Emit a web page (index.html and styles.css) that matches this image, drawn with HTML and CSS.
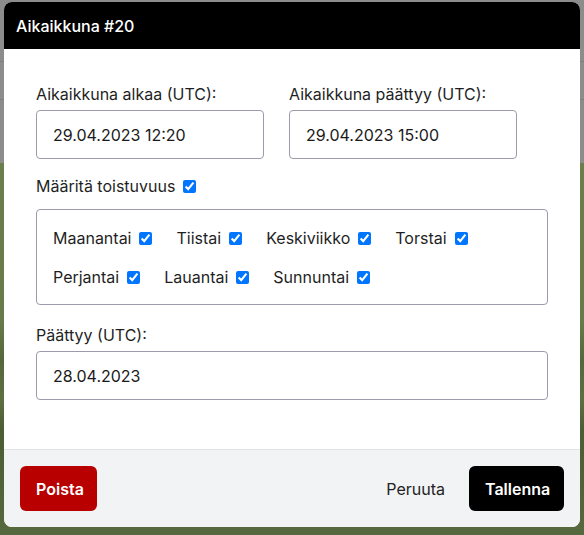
FILE: index.html
```html
<!DOCTYPE html>
<html lang="fi">
<head>
<meta charset="utf-8">
<title>Aikaikkuna #20</title>
<link rel="stylesheet" href="styles.css">
</head>
<body>
<div class="modal">
  <div class="modal-header">Aikaikkuna #20</div>
  <div class="modal-body">
    <div class="row">
      <div class="field">
        <label class="label">Aikaikkuna alkaa (UTC):</label>
        <div class="input input-half">29.04.2023 12:20</div>
      </div>
      <div class="field">
        <label class="label">Aikaikkuna päättyy (UTC):</label>
        <div class="input input-half">29.04.2023 15:00</div>
      </div>
    </div>
    <label class="check-line">Määritä toistuvuus <input type="checkbox" checked></label>
    <div class="days">
      <label class="day">Maanantai <input type="checkbox" checked></label>
      <label class="day">Tiistai <input type="checkbox" checked></label>
      <label class="day">Keskiviikko <input type="checkbox" checked></label>
      <label class="day">Torstai <input type="checkbox" checked></label>
      <label class="day">Perjantai <input type="checkbox" checked></label>
      <label class="day">Lauantai <input type="checkbox" checked></label>
      <label class="day">Sunnuntai <input type="checkbox" checked></label>
    </div>
    <label class="label">Päättyy (UTC):</label>
    <div class="input">28.04.2023</div>
  </div>
  <div class="modal-footer">
    <button class="btn btn-danger">Poista</button>
    <div class="spacer"></div>
    <button class="btn btn-link">Peruuta</button>
    <button class="btn btn-primary">Tallenna</button>
  </div>
</div>
</body>
</html>
```
FILE: styles.css
```css
* { box-sizing: border-box; }
html, body { margin: 0; height: 100%; }
body {
  font-family: Inter, "Noto Sans", sans-serif;
  color: #1f1f1f;
  padding: 2px 4px 0 4px;
  background:
    linear-gradient(to bottom,
      #8c8c8c 0, #8c8c8c 61px, #7f7f7f 61px, #7f7f7f 62px,
      #8c8c8c 62px, #8c8c8c 99px, #7f7f7f 99px, #7f7f7f 100px,
      #8c8c8c 100px, #8c8c8c 163px,
      #6b7f4c 163px, #677a49 320px, #55683b 360px, #5d7042 400px,
      #4b5d33 430px, #4f6137 470px, #56683d 535px);
}
.modal {
  width: 576px;
  height: 525px;
  background: #fff;
  border-radius: 8px;
  overflow: hidden;
  display: flex;
  flex-direction: column;
}
.modal-header {
  background: #000;
  color: #fff;
  height: 47px;
  padding: 0 12px;
  display: flex;
  align-items: center;
  font-size: 16px;
  font-weight: 500;
}
.modal-body {
  flex: 1;
  padding: 35px 32px 0 32px;
  display: flex;
  flex-direction: column;
}
.row { display: flex; gap: 25px; }
.field { display: flex; flex-direction: column; }
.label {
  font-size: 16px;
  line-height: 20px;
  margin-bottom: 6px;
  display: block;
}
.input {
  height: 49px;
  flex: none;
  border: 1px solid #9c9aab;
  border-radius: 4px;
  padding: 0 16px;
  display: flex;
  align-items: center;
  font-size: 16px;
  color: #1a1a1a;
}
.input-half { width: 228px; }
.check-line {
  margin-top: 17px;
  font-size: 16px;
  line-height: 20px;
  display: flex;
  align-items: center;
  gap: 8px;
}
input[type="checkbox"] {
  margin: 0;
  width: 13px;
  height: 13px;
  accent-color: #0075ff;
}
.days {
  margin-top: 13px;
  margin-bottom: 20px;
  border: 1px solid #9c9aab;
  border-radius: 4px;
  padding: 18px 16px 17px 16px;
  display: flex;
  flex-wrap: wrap;
  column-gap: 24px;
  row-gap: 19px;
  height: 96px;
  flex: none;
}
.day {
  font-size: 16px;
  line-height: 20px;
  display: flex;
  align-items: center;
  gap: 8px;
}
.modal-footer {
  height: 78px;
  flex: none;
  background: #f2f3f5;
  border-top: 1px solid #e3e4e8;
  display: flex;
  align-items: center;
  padding: 0 16px;
}
.spacer { flex: 1; }
.btn {
  font-family: Inter, "Noto Sans", sans-serif;
  font-size: 16px;
  height: 45px;
  border: 0;
  border-radius: 6px;
  padding: 0 16px;
  cursor: pointer;
}
.btn-danger { background: #b80000; color: #fff; font-weight: 600; width: 77px; }
.btn-primary { background: #000; color: #fff; font-weight: 600; width: 95px; }
.btn-link { background: transparent; color: #222; margin-right: 8px; }
```
